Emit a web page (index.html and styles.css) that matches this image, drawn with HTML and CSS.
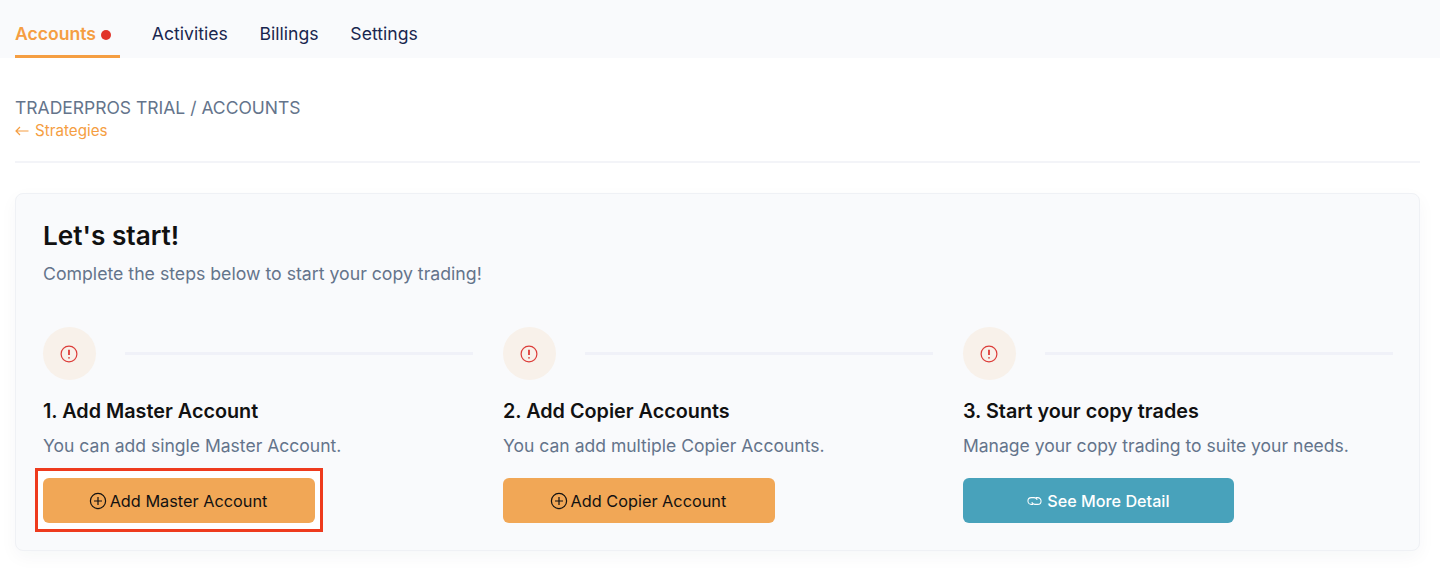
FILE: index.html
```html
<!DOCTYPE html>
<html lang="en">
<head>
<meta charset="utf-8">
<title>Accounts</title>
<link rel="stylesheet" href="styles.css">
</head>
<body>
<nav class="tabs">
  <a class="tab tab-active">Accounts<span class="dot"></span></a>
  <a class="tab">Activities</a>
  <a class="tab">Billings</a>
  <a class="tab">Settings</a>
</nav>
<main class="page">
  <header class="page-head">
    <div class="crumb">TRADERPROS TRIAL / ACCOUNTS</div>
    <a class="back"><svg class="back-icon" viewBox="0 0 14 10"><path d="M13.5 5H1M5 1 1 5l4 4"/></svg>Strategies</a>
  </header>
  <section class="card">
    <h1 class="card-title">Let's start!</h1>
    <p class="card-sub">Complete the steps below to start your copy trading!</p>
    <div class="steps">
      <div class="step">
        <div class="step-top">
          <span class="badge"><svg class="alert" viewBox="0 0 18 18"><circle cx="9" cy="9" r="7.9"/><path d="M9 4.8v5.2M9 12.2v1.3"/></svg></span>
          <span class="rule"></span>
        </div>
        <h2 class="step-title">1. Add Master Account</h2>
        <p class="step-text">You can add single Master Account.</p>
        <div class="spot">
          <a class="btn btn-orange"><svg class="plus" viewBox="0 0 18 18"><circle cx="9" cy="9" r="7.6"/><path d="M9 5v8M5 9h8"/></svg>Add Master Account</a>
        </div>
      </div>
      <div class="step">
        <div class="step-top">
          <span class="badge"><svg class="alert" viewBox="0 0 18 18"><circle cx="9" cy="9" r="7.9"/><path d="M9 4.8v5.2M9 12.2v1.3"/></svg></span>
          <span class="rule"></span>
        </div>
        <h2 class="step-title">2. Add Copier Accounts</h2>
        <p class="step-text">You can add multiple Copier Accounts.</p>
        <a class="btn btn-orange"><svg class="plus" viewBox="0 0 18 18"><circle cx="9" cy="9" r="7.6"/><path d="M9 5v8M5 9h8"/></svg>Add Copier Account</a>
      </div>
      <div class="step">
        <div class="step-top">
          <span class="badge"><svg class="alert" viewBox="0 0 18 18"><circle cx="9" cy="9" r="7.9"/><path d="M9 4.8v5.2M9 12.2v1.3"/></svg></span>
          <span class="rule"></span>
        </div>
        <h2 class="step-title">3. Start your copy trades</h2>
        <p class="step-text">Manage your copy trading to suite your needs.</p>
        <a class="btn btn-teal"><svg class="link" viewBox="0 0 16 10"><path d="M6.5 8.6H4.6a3.6 3.6 0 0 1 0-7.2h3a3.6 3.6 0 0 1 3.3 2.2"/><path d="M9.5 1.4h1.9a3.6 3.6 0 0 1 0 7.2h-3a3.6 3.6 0 0 1-3.3-2.2"/></svg>See More Detail</a>
      </div>
    </div>
  </section>
</main>
</body>
</html>
```
FILE: styles.css
```css
* { box-sizing: border-box; }
html, body { margin: 0; padding: 0; }
body {
  background: #fff;
  font-family: Inter, "Liberation Sans", sans-serif;
  color: #111;
  height: 574px;
  overflow: hidden;
}
.tabs {
  display: flex;
  gap: 31.8px;
  height: 58px;
  padding: 0 15px;
  background: #f9fafc;
}
.tab {
  display: flex;
  align-items: center;
  height: 58px;
  padding-top: 13px;
  font-size: 17.6px;
  line-height: 24px;
  color: #18264f;
  border-bottom: 3px solid transparent;
}
.tab-active {
  width: 105px;
  font-weight: 600;
  color: #f59e42;
  border-bottom-color: #f59e42;
}
.dot {
  width: 10px;
  height: 10px;
  margin-left: 5px;
  margin-top: 2px;
  border-radius: 50%;
  background: #e1342a;
}
.page { padding: 0 20px 0 15px; }
.page-head {
  height: 105px;
  padding-top: 38px;
  border-bottom: 2px solid #f3f4f8;
}
.crumb {
  font-size: 17.5px;
  line-height: 24px;
  color: #64748b;
}
.back {
  display: flex;
  align-items: center;
  font-size: 15.2px;
  line-height: 22px;
  color: #f59e42;
}
.back-icon {
  width: 14px;
  height: 10px;
  margin-right: 6px;
  fill: none;
  stroke: #f59e42;
  stroke-width: 1.2;
}
.card {
  margin-top: 30px;
  height: 358px;
  padding: 26px 27px;
  background: #f9fafc;
  border: 1px solid #eff1f5;
  border-radius: 8px;
  box-shadow: 0 6px 18px rgba(30, 40, 80, 0.04);
}
.card-title {
  margin: 0;
  font-size: 26.2px;
  line-height: 32px;
  font-weight: 600;
  color: #111;
}
.card-sub {
  margin: 9px 0 0;
  font-size: 17.7px;
  line-height: 26px;
  color: #64748b;
}
.steps {
  display: grid;
  grid-template-columns: repeat(3, 429.67px);
  column-gap: 30.3px;
  margin-top: 40px;
}
.step-top {
  display: flex;
  align-items: center;
  gap: 29px;
  height: 53px;
}
.badge {
  flex: none;
  display: flex;
  align-items: center;
  justify-content: center;
  width: 53px;
  height: 53px;
  border-radius: 50%;
  background: #f8f1ea;
}
.alert {
  width: 18px;
  height: 18px;
  margin-right: 1px;
  fill: none;
  stroke: #dc3c38;
  stroke-width: 1.2;
}
.alert path { stroke-width: 1.8; }
.rule {
  flex: 1;
  height: 3px;
  background: #f0f1f8;
}
.step-title {
  margin: 18px 0 0;
  font-size: 19.8px;
  line-height: 26px;
  font-weight: 600;
  color: #111;
}
.step-text {
  margin: 9px 0 0;
  font-size: 17.55px;
  line-height: 26px;
  color: #64748b;
}
.spot {
  position: relative;
  isolation: isolate;
  margin-top: 19px;
  width: 272px;
}
.spot::before {
  content: "";
  position: absolute;
  z-index: -1;
  inset: -10px -8px -9px -8px;
  background: #fff;
  border: 3px solid #ee3a1d;
}
.spot .btn { margin-top: 0; }
.btn {
  display: flex;
  align-items: center;
  justify-content: center;
  width: 272px;
  height: 45px;
  margin-top: 19px;
  padding-right: 2px;
  border-radius: 6px;
  font-size: 16.3px;
  line-height: 24px;
}
.btn-orange { background: #f1a756; color: #111; }
.btn-teal { width: 271px; background: #48a2bb; color: #fff; font-weight: 500; font-size: 16.2px; padding-right: 0; }
.plus {
  width: 18px;
  height: 18px;
  margin-right: 3px;
  fill: none;
  stroke: #111;
  stroke-width: 1.2;
}
.link {
  width: 15px;
  height: 10px;
  margin-right: 5px;
  fill: none;
  stroke: #fff;
  stroke-width: 1.1;
}
```
